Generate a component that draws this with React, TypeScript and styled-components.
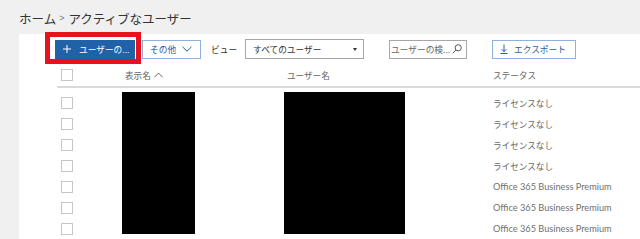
import React from 'react'
import styled, { createGlobalStyle } from 'styled-components'

const GlobalStyle = createGlobalStyle`
    html, body {
        margin: 0;
        padding: 0;
        background: #f0f0f0;
        font-family: "Liberation Sans", "Noto Sans CJK JP", sans-serif;
        overflow: hidden;
    }
`

const Page = styled.div`
    width: 640px;
    height: 239px;
    display: flex;
    flex-direction: column;
`

const Breadcrumb = styled.div`
    height: 34px;
    padding: 2px 0 0 19px;
    box-sizing: border-box;
    display: flex;
    align-items: center;
    font-size: 12.5px;
    color: #333;
`

const Separator = styled.span`
    font-size: 9px;
    color: #777;
    margin: 0 4px 0 3px;
`

const Panel = styled.div`
    flex: 1;
    margin-left: 19px;
    background: #fff;
    padding-top: 5px;
`

const Toolbar = styled.div`
    display: flex;
    align-items: center;
    padding-left: 36px;
    height: 20px;
`

const Highlighted = styled.div`
    position: relative;
    display: flex;
`

const RedFrame = styled.span`
    position: absolute;
    top: -8px;
    left: -10px;
    right: -6px;
    bottom: -5px;
    border: 5px solid #e8121c;
    pointer-events: none;
`

const PrimaryButton = styled.button`
    width: 80px;
    height: 19px;
    border: none;
    background: #2161a8;
    color: #fff;
    font-family: inherit;
    font-size: 8.7px;
    display: flex;
    align-items: center;
    gap: 8px;
    padding: 0 0 0 8px;
`

const OutlineButton = styled.button<{ $width: number; $offset: number }>`
    width: ${p => p.$width}px;
    margin-left: ${p => p.$offset}px;
    height: 19px;
    box-sizing: border-box;
    border: 1px solid #8fb2da;
    background: #fff;
    color: #2b5ea6;
    font-family: inherit;
    font-size: 8.7px;
    display: flex;
    align-items: center;
    gap: 6px;
    padding: 0 0 0 7px;
`

const ViewLabel = styled.span`
    margin-left: 10px;
    font-size: 8.7px;
    color: #333;
`

const Select = styled.div`
    margin-left: 8px;
    width: 119px;
    height: 20px;
    box-sizing: border-box;
    border: 1px solid #a6a6a6;
    display: flex;
    align-items: center;
    justify-content: space-between;
    padding: 0 6px 0 7px;
    font-size: 8.7px;
    color: #333;
`

const Search = styled.div`
    margin-left: 25px;
    width: 78px;
    height: 19px;
    box-sizing: border-box;
    border: 1px solid #a6a6a6;
    display: flex;
    align-items: center;
    justify-content: space-between;
    padding: 0 4px 0 1px;
    font-size: 8.7px;
    color: #666;
`

const Table = styled.div`
    margin: 5px 0 0 38px;
`

const columns = '65px 162px 206px 1fr'

const HeaderRow = styled.div`
    display: grid;
    grid-template-columns: ${columns};
    align-items: center;
    height: 22px;
    border-bottom: 2px solid #d9d9d9;
`

const Body = styled.div`
    display: grid;
    grid-template-columns: ${columns};
    grid-template-rows: repeat(7, 21px);
    padding-top: 4px;
`

const Cell = styled.div<{ $col: number; $row?: number }>`
    grid-column: ${p => p.$col};
    ${p => (p.$row ? `grid-row: ${p.$row};` : '')}
    display: flex;
    align-items: center;
    gap: 3px;
    padding-left: ${p => (p.$col === 1 ? 4 : 3)}px;
    font-size: 8.6px;
    color: #666;
    white-space: nowrap;
`

const StatusText = styled.span<{ $latin: boolean }>`
    font-family: ${p => (p.$latin ? '"Lato", "Liberation Sans", sans-serif' : 'inherit')};
    font-size: ${p => (p.$latin ? 9.2 : 8.6)}px;
    color: ${p => (p.$latin ? '#707070' : '#666')};
`

const Checkbox = styled.span`
    width: 12px;
    height: 12px;
    box-sizing: border-box;
    border: 1px solid #c6c6c6;
    background: #fff;
`

const Redaction = styled.div<{ $col: number; $width: number }>`
    grid-column: ${p => p.$col};
    grid-row: 1 / span 7;
    align-self: start;
    width: ${p => p.$width}px;
    height: 142px;
    background: #000;
`

const Plus = () => (
    <svg width="8" height="8" viewBox="0 0 8 8">
        <path d="M4 0v8M0 4h8" stroke="#fff" strokeWidth="1" />
    </svg>
)

const ChevronDown = () => (
    <svg width="10" height="6" viewBox="0 0 10 6">
        <path d="M0.5 0.8L5 5.2L9.5 0.8" fill="none" stroke="#2b5ea6" strokeWidth="1" />
    </svg>
)

const ChevronUp = () => (
    <svg width="9" height="6" viewBox="0 0 9 6">
        <path d="M0.5 5.2L4.5 1L8.5 5.2" fill="none" stroke="#666" strokeWidth="1" />
    </svg>
)

const Caret = () => (
    <svg width="4" height="3" viewBox="0 0 4 3">
        <path d="M0 0h4L2 3z" fill="#333" />
    </svg>
)

const SearchIcon = () => (
    <svg width="10" height="10" viewBox="0 0 10 10">
        <circle cx="6.2" cy="3.8" r="3.1" fill="none" stroke="#555" strokeWidth="1" />
        <path d="M4 6L0.7 9.3" stroke="#555" strokeWidth="1" />
    </svg>
)

const ExportIcon = () => (
    <svg width="8" height="10" viewBox="0 0 8 10">
        <path d="M4 0.5v7M1.6 5.2L4 7.6L6.4 5.2M0.5 9.5h7" fill="none" stroke="#2b5ea6" strokeWidth="1" />
    </svg>
)

const statuses = [
    'ライセンスなし',
    'ライセンスなし',
    'ライセンスなし',
    'ライセンスなし',
    'Office 365 Business Premium',
    'Office 365 Business Premium',
    'Office 365 Business Premium',
]

export default function App() {
    return (
        <Page>
            <GlobalStyle />
            <Breadcrumb>
                ホーム<Separator>&gt;</Separator>アクティブなユーザー
            </Breadcrumb>
            <Panel>
                <Toolbar>
                    <Highlighted>
                        <PrimaryButton>
                            <Plus />
                            ユーザーの...
                        </PrimaryButton>
                        <RedFrame />
                    </Highlighted>
                    <OutlineButton $width={59} $offset={7}>
                        その他
                        <ChevronDown />
                    </OutlineButton>
                    <ViewLabel>ビュー</ViewLabel>
                    <Select>
                        すべてのユーザー
                        <Caret />
                    </Select>
                    <Search>
                        ユーザーの検...
                        <SearchIcon />
                    </Search>
                    <OutlineButton $width={84} $offset={25}>
                        <ExportIcon />
                        エクスポート
                    </OutlineButton>
                </Toolbar>
                <Table>
                    <HeaderRow>
                        <Cell $col={1}><Checkbox /></Cell>
                        <Cell $col={2}>表示名<ChevronUp /></Cell>
                        <Cell $col={3}>ユーザー名</Cell>
                        <Cell $col={4}>ステータス</Cell>
                    </HeaderRow>
                    <Body>
                        {statuses.map((s, i) => (
                            <React.Fragment key={i}>
                                <Cell $col={1} $row={i + 1}><Checkbox /></Cell>
                                <Cell $col={4} $row={i + 1}>
                                    <StatusText $latin={s.startsWith('Office')}>{s}</StatusText>
                                </Cell>
                            </React.Fragment>
                        ))}
                        <Redaction $col={2} $width={73} />
                        <Redaction $col={3} $width={121} />
                    </Body>
                </Table>
            </Panel>
        </Page>
    )
}
